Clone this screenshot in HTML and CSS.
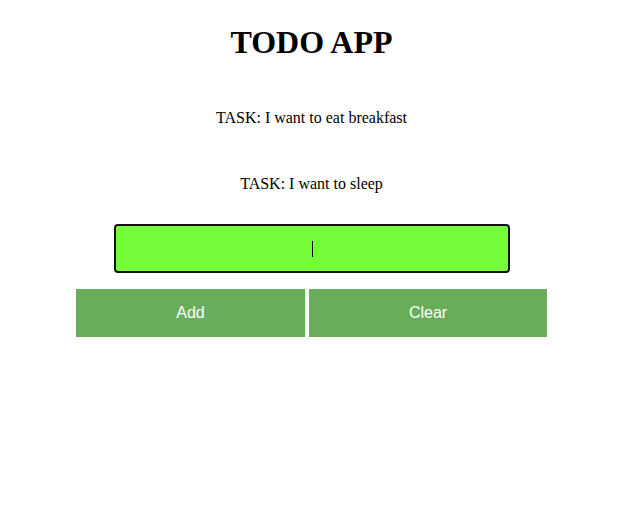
FILE: index.html
```html
<!DOCTYPE html>
<html>
<head>
<meta charset="utf-8">
<link rel="stylesheet" href="styles.css">
</head>
<body>
<div class="app">
  <h1 class="title">TODO APP</h1>
  <ul class="tasks">
    <li class="task">TASK: I want to eat breakfast</li>
    <li class="task">TASK: I want to sleep</li>
  </ul>
  <div class="input-wrap">
    <input class="task-input" type="text">
    <span class="caret"></span>
  </div>
  <div class="actions">
    <button class="btn btn-add">Add</button>
    <button class="btn btn-clear">Clear</button>
  </div>
</div>
</body>
</html>
```
FILE: styles.css
```css
html, body {
  margin: 0;
  padding: 0;
  background: #fff;
}
body {
  font-family: "Liberation Serif", "Times New Roman", serif;
  color: #000;
}
.app {
  width: 623px;
  display: flex;
  flex-direction: column;
  align-items: center;
}
.title {
  font-size: 32px;
  font-weight: bold;
  margin: 24px 0 0;
  line-height: 37px;
}
.tasks {
  list-style: none;
  margin: 48px 0 0;
  padding: 0;
  display: flex;
  flex-direction: column;
  align-items: center;
  gap: 48px;
}
.task {
  font-size: 16px;
  line-height: 18px;
}
.input-wrap {
  position: relative;
  margin-top: 31px;
  width: 396px;
  height: 49px;
}
.task-input {
  display: block;
  width: 396px;
  height: 49px;
  box-sizing: border-box;
  border: 2px solid #111;
  border-radius: 4px;
  background: #76fd3a;
  text-align: center;
  font-size: 16px;
  outline: none;
  padding: 0;
  margin: 0;
}
.caret {
  position: absolute;
  left: 198px;
  top: 17px;
  width: 1px;
  height: 16px;
  background: #000;
}
.actions {
  display: flex;
  gap: 4px;
  margin-top: 16px;
}
.btn {
  height: 48px;
  border: none;
  background: #69ad5a;
  color: #fff;
  font-family: "Liberation Sans", Arial, sans-serif;
  font-size: 16px;
  padding: 0;
}
.btn-add {
  width: 229px;
}
.btn-clear {
  width: 238px;
}
```
